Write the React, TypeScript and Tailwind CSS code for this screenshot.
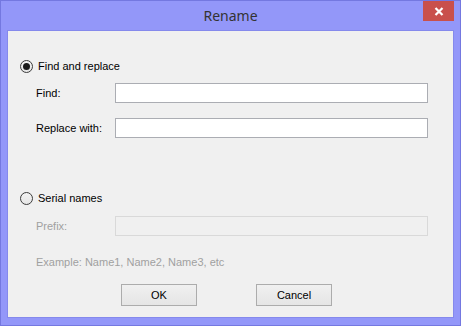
import React from "react";

function Radio({ checked, label }: { checked?: boolean; label: string }) {
  return (
    <div className="flex h-[16px] items-center">
      <div className="ml-[12px] flex h-[13px] w-[13px] items-center justify-center rounded-full border border-[#3c3c3c] bg-gradient-to-b from-[#f3f3f3] to-[#e6e6e6]">
        {checked && <div className="h-[7px] w-[7px] rounded-full bg-[#1a1a1a]" />}
      </div>
      <span className="ml-[5px] text-[11px] text-black">{label}</span>
    </div>
  );
}

function Field({ label, disabled }: { label: string; disabled?: boolean }) {
  return (
    <div className="flex items-center">
      <span
        className={`ml-[28px] w-[79px] text-[11px] ${disabled ? "text-[#a0a0a0]" : "text-black"}`}
      >
        {label}
      </span>
      <input
        disabled={disabled}
        className={`h-[20px] w-[313px] border px-1 text-[11px] outline-none ${
          disabled
            ? "border-[#d9d9d9] bg-[#f0f0f0]"
            : "border-[#abadb3] bg-white"
        }`}
      />
    </div>
  );
}

function Btn({ children }: { children: React.ReactNode }) {
  return (
    <button className="h-[22px] w-[76px] border border-[#acacac] bg-gradient-to-b from-[#f0f0f0] to-[#e5e5e5] text-[11px] text-black">
      {children}
    </button>
  );
}

export default function App() {
  return (
    <div
      className="flex h-[326px] w-[461px] flex-col border border-[#7478e0] bg-[#9397f9]"
      style={{ fontFamily: '"Liberation Sans", Arial, sans-serif' }}
    >
      {/* Title bar */}
      <div className="relative flex h-[29px] items-center justify-center">
        <span
          className="text-[14px] text-[#333]"
          style={{ fontFamily: '"Noto Sans", "Open Sans", sans-serif' }}
        >
          Rename
        </span>
        <button className="absolute right-[6px] top-0 flex h-[20px] w-[31px] items-center justify-center bg-[#c9504c]">
          <svg width="10" height="9" viewBox="0 0 10 9">
            <path d="M1.5 1 L8.5 8 M8.5 1 L1.5 8" stroke="white" strokeWidth="2.2" />
          </svg>
        </button>
      </div>

      {/* Content */}
      <div className="mx-[6px] mb-[7px] flex flex-1 flex-col border border-[#8589ec] bg-[#f0f0f0] pt-[27px]">
        <Radio checked label="Find and replace" />
        <div className="mt-[9px]">
          <Field label="Find:" />
        </div>
        <div className="mt-[15px]">
          <Field label="Replace with:" />
        </div>
        <div className="mt-[52px]">
          <Radio label="Serial names" />
        </div>
        <div className="mt-[10px]">
          <Field label="Prefix:" disabled />
        </div>
        <div className="ml-[28px] mt-[19px] h-[14px] text-[11px] leading-[14px] text-[#a0a0a0]">
          Example: Name1, Name2, Name3, etc
        </div>
        <div className="ml-[113px] mt-[15px] flex gap-[59px]">
          <Btn>OK</Btn>
          <Btn>Cancel</Btn>
        </div>
      </div>
    </div>
  );
}
